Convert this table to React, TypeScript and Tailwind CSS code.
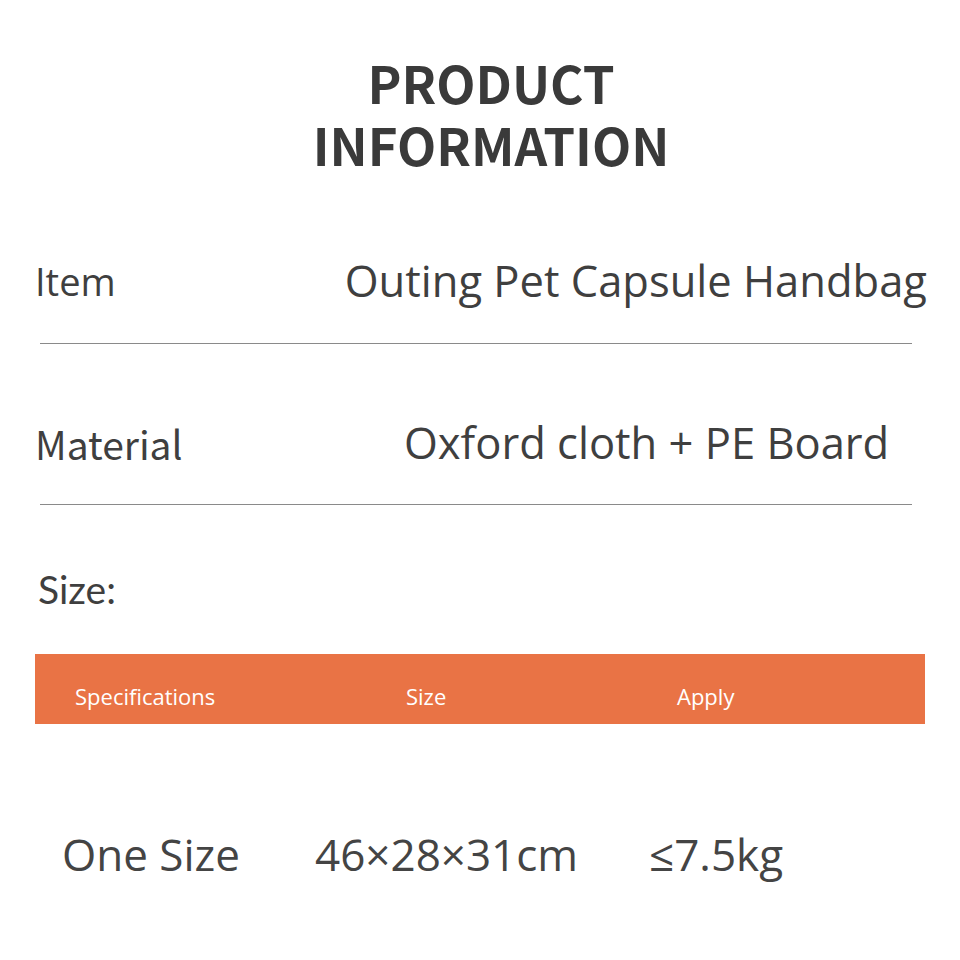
export default function App() {
  return (
    <main className="w-[960px] h-[960px] bg-white text-[#3f3f3f] overflow-hidden font-['Open_Sans',sans-serif]">
      <header className="flex flex-col items-center pt-[51px] pl-[22px] font-['Noto_Sans_CJK_SC',sans-serif] font-bold text-[#3a3a3a] text-[51px] leading-[62px]">
        <h1>PRODUCT</h1>
        <h1>INFORMATION</h1>
      </header>

      <section className="mt-[80px] px-[33px]">
        <div className="flex items-center justify-between h-[52px]">
          <span className="ml-[2px] text-[38px] font-['Open_Sans',sans-serif]">Item</span>
          <span className="text-[43.5px] font-['Open_Sans',sans-serif]">Outing Pet Capsule Handbag</span>
        </div>
        <div className="ml-[7px] mr-[15px] mt-[36px] h-px bg-[#8a8a8a]" />

        <div className="flex items-center h-[52px] mt-[73px]">
          <span className="ml-[2px] text-[39px] font-['Noto_Sans_CJK_SC',sans-serif] w-[369px]">Material</span>
          <span className="text-[43.5px] font-['Open_Sans',sans-serif]">Oxford cloth + PE Board</span>
        </div>
        <div className="ml-[7px] mr-[15px] mt-[35px] h-px bg-[#8a8a8a]" />

        <p className="mt-[58px] ml-[5px] text-[39px] font-['Lato',sans-serif] leading-[52px]">Size:</p>

        <div className="mt-[39px] ml-[2px] mr-[2px] h-[70px] bg-[#e97345] flex items-center pt-[14px] text-white text-[22px] font-['Open_Sans',sans-serif]">
          <span className="ml-[40px] w-[331px]">Specifications</span>
          <span className="w-[271px]">Size</span>
          <span>Apply</span>
        </div>

        <div className="mt-[104px] flex items-center text-[44px] text-[#444] font-['Open_Sans',sans-serif] leading-[52px]">
          <span className="ml-[29px] w-[253px]">One Size</span>
          <span className="w-[334px]">46×28×31cm</span>
          <span>≤7.5kg</span>
        </div>
      </section>
    </main>
  );
}
